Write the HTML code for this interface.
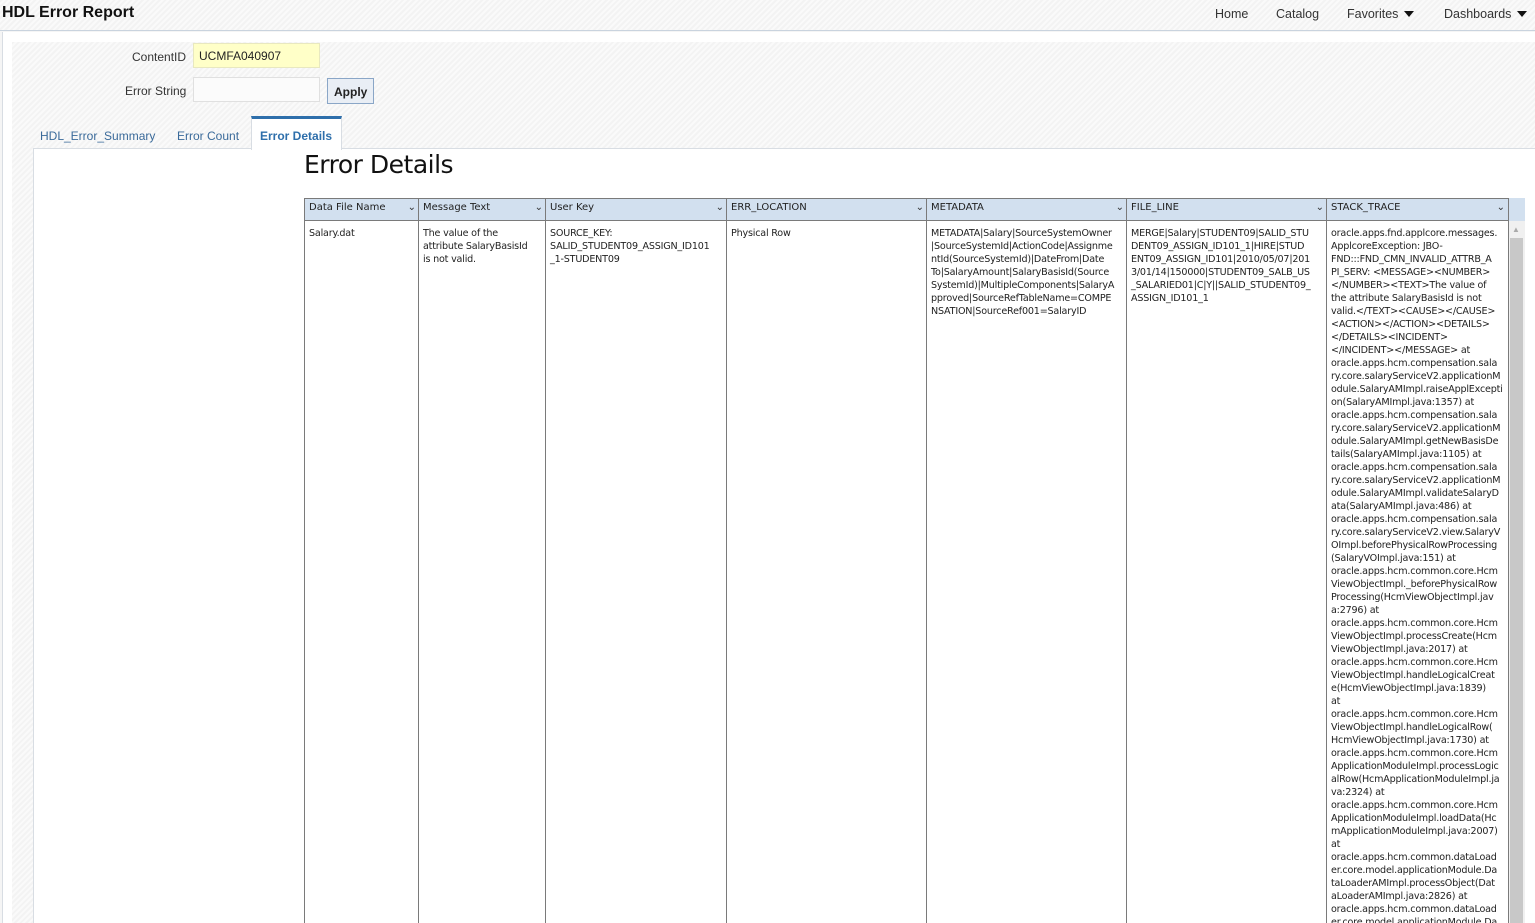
<!DOCTYPE html>
<html><head><style>
*{box-sizing:border-box}
html,body{margin:0;width:1535px;height:923px;overflow:hidden}
body{font-family:"Liberation Sans",Arial,sans-serif;background:#f5f5f5;position:relative}
.hatch{background:repeating-linear-gradient(135deg,#f3f3f3 0 2px,#fafafa 2px 4px)}
.abs{position:absolute}
.nav{top:7px;font-size:12.5px;color:#333}
.tri{display:inline-block;width:0;height:0;border-left:5px solid transparent;border-right:5px solid transparent;border-top:6px solid #111;margin-left:6px;vertical-align:1px}
.col{position:absolute;top:198px;height:725px;border-left:1px solid #7a7a7a}
.hd{position:absolute;top:198px;height:23px;background:#d2e0ef;border:1px solid #7a7a7a;border-right:none;font-family:"DejaVu Sans",sans-serif;font-size:10px;padding:3px 4px;color:#222}
.hd:after{content:"⌄";position:absolute;right:3px;top:3px;font-size:10px;color:#333}
.cell{position:absolute;top:227px;font-family:"DejaVu Sans",sans-serif;font-size:9.6px;line-height:13px;color:#222;white-space:nowrap;letter-spacing:-0.2px}
</style></head><body>
<div class="abs hatch" style="left:0;top:0;width:1535px;height:31px;border-bottom:1px solid #c9d3de"></div>
<div class="abs" style="left:2px;top:4px;font-size:16px;font-weight:bold;color:#111">HDL Error Report</div>
<div class="abs nav" style="left:1215px">Home</div>
<div class="abs nav" style="left:1276px">Catalog</div>
<div class="abs nav" style="left:1347px">Favorites<span class="tri"></span></div>
<div class="abs nav" style="left:1444px">Dashboards<span class="tri"></span></div>
<div class="abs" style="left:2px;top:32px;width:1533px;height:891px;background:#fff;border-left:1px solid #d8dde3"></div>
<div class="abs hatch" style="left:12px;top:42px;width:1523px;height:881px"></div>
<div class="abs" style="left:132px;top:50px;font-size:12px;color:#333">ContentID</div>
<div class="abs" style="left:193px;top:43px;width:127px;height:25px;background:#ffffc8;border:1px solid #e8e8c0;font-size:12px;padding:5px 5px;color:#222">UCMFA040907</div>
<div class="abs" style="left:125px;top:84px;font-size:12px;color:#333">Error String</div>
<div class="abs" style="left:193px;top:77px;width:127px;height:25px;background:#fbfbfb;border:1px solid #e0e0e0"></div>
<div class="abs" style="left:327px;top:78px;width:47px;height:26px;background:#e9eef5;border:1px solid #8aa6c7;font-size:12px;font-weight:bold;padding:6px 6px;color:#222">Apply</div>
<div class="abs" style="left:33px;top:148px;width:1502px;height:775px;background:#fff;border-top:1px solid #d8dde3;border-left:1px solid #d8dde3"></div>
<div class="abs" style="left:40px;top:129px;font-size:12px;color:#3a6a9a">HDL_Error_Summary</div>
<div class="abs" style="left:177px;top:129px;font-size:12px;color:#3a6a9a">Error Count</div>
<div class="abs" style="left:251px;top:116px;width:91px;height:34px;background:#fff;border-top:3px solid #2e6fab;border-left:1px solid #d8dde3;border-right:1px solid #d8dde3"></div>
<div class="abs" style="left:260px;top:129px;font-size:12px;font-weight:bold;color:#2e6fab">Error Details</div>
<div class="abs" style="left:304px;top:150px;font-family:'DejaVu Sans',sans-serif;font-size:25px;color:#111;letter-spacing:-0.5px">Error Details</div>

<div class="abs" style="left:1508px;top:198px;width:17px;height:23px;background:#d2e0ef"></div>
<div class="abs" style="left:1508px;top:221px;width:17px;height:702px;background:#f0f0f0"></div>
<div class="abs" style="left:1510px;top:238px;width:13px;height:685px;background:#c8c8c8"></div>
<div class="abs" style="left:1512px;top:225px;font-size:8px;color:#aaa">▲</div>

<div class="hd" style="left:304px;width:115px">Data File Name</div>
<div class="hd" style="left:418px;width:128px">Message Text</div>
<div class="hd" style="left:545px;width:182px">User Key</div>
<div class="hd" style="left:726px;width:201px">ERR_LOCATION</div>
<div class="hd" style="left:926px;width:201px">METADATA</div>
<div class="hd" style="left:1126px;width:201px">FILE_LINE</div>
<div class="hd" style="left:1326px;width:183px;border-right:1px solid #7a7a7a">STACK_TRACE</div>
<div class="col" style="left:304px"></div><div class="col" style="left:418px"></div><div class="col" style="left:545px"></div><div class="col" style="left:726px"></div><div class="col" style="left:926px"></div><div class="col" style="left:1126px"></div><div class="col" style="left:1326px"></div><div class="col" style="left:1508px"></div>
<div class="abs" style="left:304px;top:220px;width:1204px;height:1px;background:#7a7a7a"></div>

<div class="cell" style="left:309px">Salary.dat</div>
<div class="cell" style="left:423px">The value of the<br>attribute SalaryBasisId<br>is not valid.</div>
<div class="cell" style="left:550px">SOURCE_KEY:<br>SALID_STUDENT09_ASSIGN_ID101<br>_1-STUDENT09</div>
<div class="cell" style="left:731px">Physical Row</div>
<div class="cell" style="left:931px">METADATA|Salary|SourceSystemOwner<br>|SourceSystemId|ActionCode|Assignme<br>ntId(SourceSystemId)|DateFrom|Date<br>To|SalaryAmount|SalaryBasisId(Source<br>SystemId)|MultipleComponents|SalaryA<br>pproved|SourceRefTableName=COMPE<br>NSATION|SourceRef001=SalaryID</div>
<div class="cell" style="left:1131px">MERGE|Salary|STUDENT09|SALID_STU<br>DENT09_ASSIGN_ID101_1|HIRE|STUD<br>ENT09_ASSIGN_ID101|2010/05/07|201<br>3/01/14|150000|STUDENT09_SALB_US<br>_SALARIED01|C|Y||SALID_STUDENT09_<br>ASSIGN_ID101_1</div>
<div class="cell" style="left:1331px">oracle.apps.fnd.applcore.messages.<br>ApplcoreException: JBO-<br>FND:::FND_CMN_INVALID_ATTRB_A<br>PI_SERV: &lt;MESSAGE&gt;&lt;NUMBER&gt;<br>&lt;/NUMBER&gt;&lt;TEXT&gt;The value of<br>the attribute SalaryBasisId is not<br>valid.&lt;/TEXT&gt;&lt;CAUSE&gt;&lt;/CAUSE&gt;<br>&lt;ACTION&gt;&lt;/ACTION&gt;&lt;DETAILS&gt;<br>&lt;/DETAILS&gt;&lt;INCIDENT&gt;<br>&lt;/INCIDENT&gt;&lt;/MESSAGE&gt; at<br>oracle.apps.hcm.compensation.sala<br>ry.core.salaryServiceV2.applicationM<br>odule.SalaryAMImpl.raiseApplExcepti<br>on(SalaryAMImpl.java:1357) at<br>oracle.apps.hcm.compensation.sala<br>ry.core.salaryServiceV2.applicationM<br>odule.SalaryAMImpl.getNewBasisDe<br>tails(SalaryAMImpl.java:1105) at<br>oracle.apps.hcm.compensation.sala<br>ry.core.salaryServiceV2.applicationM<br>odule.SalaryAMImpl.validateSalaryD<br>ata(SalaryAMImpl.java:486) at<br>oracle.apps.hcm.compensation.sala<br>ry.core.salaryServiceV2.view.SalaryV<br>OImpl.beforePhysicalRowProcessing<br>(SalaryVOImpl.java:151) at<br>oracle.apps.hcm.common.core.Hcm<br>ViewObjectImpl._beforePhysicalRow<br>Processing(HcmViewObjectImpl.jav<br>a:2796) at<br>oracle.apps.hcm.common.core.Hcm<br>ViewObjectImpl.processCreate(Hcm<br>ViewObjectImpl.java:2017) at<br>oracle.apps.hcm.common.core.Hcm<br>ViewObjectImpl.handleLogicalCreat<br>e(HcmViewObjectImpl.java:1839)<br>at<br>oracle.apps.hcm.common.core.Hcm<br>ViewObjectImpl.handleLogicalRow(<br>HcmViewObjectImpl.java:1730) at<br>oracle.apps.hcm.common.core.Hcm<br>ApplicationModuleImpl.processLogic<br>alRow(HcmApplicationModuleImpl.ja<br>va:2324) at<br>oracle.apps.hcm.common.core.Hcm<br>ApplicationModuleImpl.loadData(Hc<br>mApplicationModuleImpl.java:2007)<br>at<br>oracle.apps.hcm.common.dataLoad<br>er.core.model.applicationModule.Da<br>taLoaderAMImpl.processObject(Dat<br>aLoaderAMImpl.java:2826) at<br>oracle.apps.hcm.common.dataLoad<br>er.core.model.applicationModule.Da</div>
</body></html>
